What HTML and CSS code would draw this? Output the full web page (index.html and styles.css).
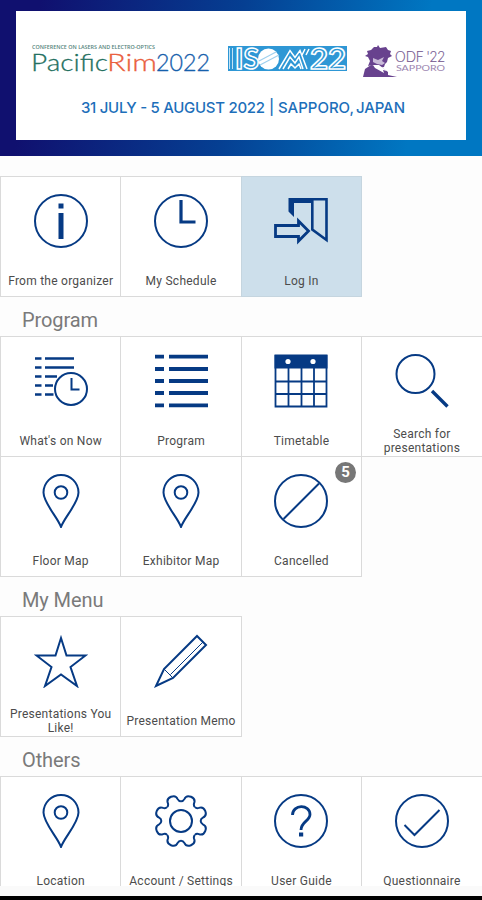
FILE: index.html
```
<!DOCTYPE html>
<html lang="en">
<head>
    <meta charset="UTF-8">
    <meta name="viewport" content="width=device-width, initial-scale=1.0">
    <title>PacificRim2022</title>
    <link rel="stylesheet" href="styles.css">
</head>
<body>
    <svg class="defs" width="0" height="0">
        <defs>
            <g id="pin">
                <path d="M27 53C24 44 9.500 29 9.500 18.500a17.500 17.500 0 0 1 35 0C44.500 29 30 44 27 53z"/>
                <circle cx="27" cy="18.500" r="6.300"/>
            </g>
            <path id="tooth" d="M-7.500-18.200Q-5.500-19-5.300-21.500C-5.200-25-3.500-26.200 0-26.200S5.200-25 5.300-21.500Q5.500-19 7.500-18.200"/>
        </defs>
    </svg>

    <header class="header">
        <div class="banner">
            <div class="logos">
                <svg class="logo-rim" width="180" height="32" viewBox="0 0 180 32">
                    <text class="rim-top" x="0" y="4" textLength="123" lengthAdjust="spacingAndGlyphs">CONFERENCE ON LASERS AND ELECTRO-OPTICS</text>
                    <text class="rim-name green" x="-1" y="26" textLength="77" lengthAdjust="spacingAndGlyphs">Pacific</text>
                    <text class="rim-name orange" x="75" y="26" textLength="50" lengthAdjust="spacingAndGlyphs">Rim</text>
                    <text class="rim-name blue" x="124" y="26" textLength="54" lengthAdjust="spacingAndGlyphs">2022</text>
                </svg>
                <svg class="logo-isom" width="119" height="25" viewBox="0 0 119 25">
                    <rect width="119" height="25" fill="#2e97d5"/>
                    <path d="M1.500 2v21M4.500 2v21" stroke="#c4e3f5" stroke-width="1"/>
                    <text class="isom" x="7" y="22.500" textLength="24" lengthAdjust="spacingAndGlyphs">IS</text>
                    <circle cx="40.500" cy="13" r="10.500" fill="#fff"/>
                    <path d="M31 15L48 6M32 19L51 9" stroke="#9fd0ee" stroke-width="1.200"/>
                    <path d="M51 23L62 4.500l5 7 5-7 7 18.500M55 23l7-12 5 6 4-6 4 12M60 23l3-5 4 4 4-4 2 5" fill="none" stroke="#fff" stroke-width="1.500"/>
                    <path d="M77 3l-3 6M81 3l-3 6" stroke="#fff" stroke-width="1.500"/>
                    <text class="isom" x="82" y="22.500" textLength="36" lengthAdjust="spacingAndGlyphs">22</text>
                </svg>
                <svg class="logo-odf" width="84" height="34" viewBox="0 0 84 34">
                    <path d="M2 11l3-2-1-3 4-1 3-3 3 0 1-2 2 3 6-1 2 3 3 1-1 3 2 2-4 2-1 4-2 2-1 3-6 1-6-3-4 1 2-5-2-4z" fill="#68428e"/>
                    <path d="M10 13l5 2 6-3-2 4 3 2-3 2-5-1-4-2z" fill="#c9bad8"/>
                    <path d="M0 32l2-8 6-4 9 1 8 6 0 3 9 2z" fill="#68428e"/>
                    <path d="M10 20l6 0 8 6-4-1 1 3-9-5z" fill="#fff"/>
                    <text class="odf" x="32" y="17" textLength="50" lengthAdjust="spacingAndGlyphs">ODF '22</text>
                    <text class="odf-city" x="33" y="26" textLength="49" lengthAdjust="spacingAndGlyphs">SAPPORO</text>
                </svg>
            </div>
            <svg class="date" width="326" height="18" viewBox="0 0 326 18">
                <text x="0" y="14.500" textLength="184">31 JULY - 5 AUGUST 2022</text>
                <text x="188" y="14">|</text>
                <text x="197" y="14.500" textLength="76">SAPPORO,</text>
                <text x="275" y="14.500" textLength="49">JAPAN</text>
            </svg>
        </div>
    </header>

    <main class="menu">
        <div class="grid">
            <a class="tile">
                <svg class="icon" viewBox="0 0 54 54">
                    <circle cx="27" cy="27" r="26"/>
                    <path class="fill" d="M24.500 9.500h5v5h-5zM24.500 19h5v26h-5z"/>
                </svg>
                <span class="label">From the organizer</span>
            </a>
            <a class="tile">
                <svg class="icon" viewBox="0 0 54 54">
                    <circle cx="27" cy="27" r="26"/>
                    <path d="M27 6v22h14.500" stroke-width="3.200"/>
                </svg>
                <span class="label">My Schedule</span>
            </a>
            <a class="tile login">
                <svg class="icon" viewBox="0 0 54 54">
                    <path class="fill" d="M14.500 4H39v5H20V23l-5.500-5.500z"/>
                    <path d="M38.300 5.300H52.500V46L38.300 35.500z" stroke-width="2.600"/>
                    <path d="M1.500 31.500H24.500v-4.500L34.500 37l-10 10v-4.500H1.500z" stroke-width="2.800"/>
                </svg>
                <span class="label">Log In</span>
            </a>
        </div>

        <h2>Program</h2>
        <div class="grid">
            <a class="tile">
                <svg class="icon" viewBox="0 0 54 54">
                    <path d="M1 4.500h6.500M11 4.500h29M1 13.500h6.500M11 13.500h29M1 22.500h6.500M11 22.500h12M1 31.500h6.500M11 31.500h8M1 40.500h6.500M11 40.500h8.500" stroke-width="2.600"/>
                    <circle cx="37" cy="35" r="16"/>
                    <path d="M37.500 24v11.500h8"/>
                </svg>
                <span class="label">What's on Now</span>
            </a>
            <a class="tile">
                <svg class="icon" viewBox="0 0 54 54">
                    <path d="M1 2.700h9M15 2.700h39M1 15h9M15 15h39M1 27h9M15 27h39M1 39h9M15 39h39M1 51.300h9M15 51.300h39" stroke-width="3.800"/>
                </svg>
                <span class="label">Program</span>
            </a>
            <a class="tile">
                <svg class="icon" viewBox="0 0 54 54">
                    <path class="fill" d="M.5.500h53v14H.5z"/>
                    <path d="M1.500 1v51.500h51V1M1 27.500h52M1 40h52M14.500 14v38M27.500 14v38M40 14v38" stroke-width="1.800"/>
                    <circle class="dot" cx="14" cy="7.500" r="2.600"/>
                    <circle class="dot" cx="39" cy="7.500" r="2.600"/>
                </svg>
                <span class="label">Timetable</span>
            </a>
            <a class="tile">
                <svg class="icon" viewBox="0 0 54 54">
                    <circle cx="20.500" cy="20" r="19"/>
                    <path d="M37 37l15.500 15.500" stroke-width="3.400"/>
                </svg>
                <span class="label">Search for presentations</span>
            </a>
            <a class="tile">
                <svg class="icon" viewBox="0 0 54 54"><use href="#pin"/></svg>
                <span class="label">Floor Map</span>
            </a>
            <a class="tile">
                <svg class="icon" viewBox="0 0 54 54"><use href="#pin"/></svg>
                <span class="label">Exhibitor Map</span>
            </a>
            <a class="tile">
                <svg class="icon" viewBox="0 0 54 54">
                    <circle cx="27" cy="27" r="26"/>
                    <path d="M9.500 45L45 9.500"/>
                </svg>
                <span class="label">Cancelled</span>
                <span class="badge">5</span>
            </a>
        </div>

        <h2>My Menu</h2>
        <div class="grid">
            <a class="tile">
                <svg class="icon" viewBox="0 0 54 54">
                    <path d="M27 4l5.500 17.500h19L36.500 33 43 52 27 40.500 11 52l6.500-19L2.500 21.500h19z"/>
                </svg>
                <span class="label">Presentations You Like!</span>
            </a>
            <a class="tile">
                <svg class="icon" viewBox="0 0 54 54">
                    <path d="M2 52L10 35 43 2l9 9-33 33z"/>
                    <path d="M10 35l9 9M16.500 40.500L49 8" stroke-width="1"/>
                </svg>
                <span class="label">Presentation Memo</span>
            </a>
        </div>

        <h2>Others</h2>
        <div class="grid">
            <a class="tile">
                <svg class="icon" viewBox="0 0 54 54"><use href="#pin"/></svg>
                <span class="label">Location</span>
            </a>
            <a class="tile">
                <svg class="icon" viewBox="0 0 54 54">
                    <circle cx="27" cy="27" r="11"/>
                    <g transform="translate(27 27) rotate(22.500)">
                        <use href="#tooth"/>
                        <use href="#tooth" transform="rotate(45)"/>
                        <use href="#tooth" transform="rotate(90)"/>
                        <use href="#tooth" transform="rotate(135)"/>
                        <use href="#tooth" transform="rotate(180)"/>
                        <use href="#tooth" transform="rotate(225)"/>
                        <use href="#tooth" transform="rotate(270)"/>
                        <use href="#tooth" transform="rotate(315)"/>
                    </g>
                </svg>
                <span class="label">Account / Settings</span>
            </a>
            <a class="tile">
                <svg class="icon" viewBox="0 0 54 54">
                    <circle cx="27" cy="27" r="26"/>
                    <path d="M18.500 21C18.500 10 36 10 36 20.500C36 27 27 27.500 27 36" stroke-width="2.800"/>
                    <path class="fill" d="M25 38.500h4.200v4H25z"/>
                </svg>
                <span class="label">User Guide</span>
            </a>
            <a class="tile">
                <svg class="icon" viewBox="0 0 54 54">
                    <circle cx="27" cy="27" r="26"/>
                    <path d="M9.500 31l10 10L44.500 16"/>
                </svg>
                <span class="label">Questionnaire</span>
            </a>
        </div>
    </main>
    <footer class="bottom"></footer>
</body>
</html>
```
FILE: styles.css
```
* {
    box-sizing: border-box;
}
body {
    margin: 0;
    height: 900px;
    overflow: hidden;
    font-family: Roboto, Arial, sans-serif;
    background-color: #fdfdfd;
}
.defs {
    display: block;
}
.header {
    height: 156px;
    padding: 11px 16px 16px;
    background: linear-gradient(100deg, #10106f 8%, #053f92 48%, #0077c2 85%);
}
.banner {
    height: 129px;
    padding: 34px 16px 0;
    background-color: white;
}
.logos {
    display: flex;
    height: 53px;
}
.logos svg {
    overflow: visible;
}
.logo-rim {
    margin-right: 16px;
}
.logo-isom {
    margin: 1px 16px 0 0;
}
.rim-top {
    font: 600 4.5px "Open Sans", sans-serif;
    fill: #55857c;
}
.rim-name {
    font: 300 24px Lato, sans-serif;
    stroke-width: 0.3;
}
.green {
    fill: #24705f;
    stroke: #24705f;
}
.orange {
    fill: #ea6040;
    stroke: #ea6040;
}
.blue {
    fill: #1660ac;
    stroke: #1660ac;
}
.isom {
    font: 700 28px Lato, sans-serif;
    fill: #2e97d5;
    stroke: white;
    stroke-width: 1.5;
}
.odf {
    font: 300 15px Lato, sans-serif;
    fill: #74578f;
    stroke: #74578f;
    stroke-width: 0.2;
}
.odf-city {
    font: 400 8px Lato, sans-serif;
    fill: #9b85b0;
}
.date {
    display: block;
    margin-left: 49px;
    font: 500 15px Inter, sans-serif;
    fill: #1d6fba;
}
.menu {
    height: 730px;
    padding-top: 20px;
    overflow: hidden;
}
.grid {
    display: grid;
    grid-template-columns: repeat(4, 120.4px);
    grid-auto-rows: 120px;
}
.tile {
    position: relative;
    display: flex;
    flex-direction: column;
    align-items: center;
    margin: 0 -1px -1px 0;
    padding-top: 17px;
    background-color: white;
    border: 1px solid #dadada;
}
.login {
    background-color: #cddfeb;
    border-color: #c5d5df;
}
.icon {
    width: 54px;
    height: 54px;
    fill: none;
    stroke: #063a84;
    stroke-width: 2;
}
.icon .fill {
    fill: #063a84;
    stroke: none;
}
.icon .dot {
    fill: white;
    stroke: none;
}
.label {
    display: flex;
    align-items: center;
    justify-content: center;
    height: 28px;
    margin-top: 19px;
    padding: 0 3px;
    font-size: 12px;
    line-height: 14px;
    letter-spacing: 0.25px;
    text-align: center;
    color: #4c4c4c;
}
.badge {
    position: absolute;
    top: 5px;
    right: 5px;
    width: 21px;
    height: 21px;
    border-radius: 50%;
    background-color: #777;
    color: white;
    font-size: 15px;
    font-weight: 700;
    line-height: 21px;
    text-align: center;
}
h2 {
    height: 40px;
    margin: 0;
    padding-left: 22px;
    font-size: 20px;
    font-weight: 400;
    line-height: 49px;
    letter-spacing: -0.1px;
    color: #7a7a7a;
}
.bottom {
    height: 14px;
    border-top: 10px solid #fafafa;
    background-color: black;
}
```
